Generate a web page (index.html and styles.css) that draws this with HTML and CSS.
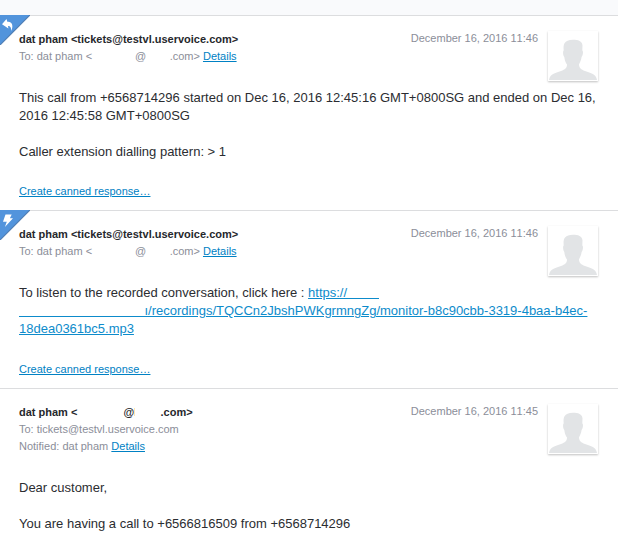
FILE: index.html
```
<!DOCTYPE html>
<html lang="en">
<head>
<meta charset="utf-8">
<title>Ticket messages</title>
<link rel="stylesheet" href="styles.css">
</head>
<body>
<svg class="defs" width="0" height="0" aria-hidden="true">
  <symbol id="person" viewBox="0 0 48 48">
    <path d="M24 7.800C29 7.800 33.300 9 33.500 13.500L33.300 18.500C34.500 19 34 23.500 32.600 25C32.200 28.500 30.500 31 30 32.500C30.200 36 32 37.500 36 39C42 41 47 42 48 48H0C1 42 6 41 12 39C16 37.500 18 36 18 32.500C16.800 31 15.700 28.500 15.300 25C14 23.500 13.700 19 14.700 18.500C14.200 12.500 14.700 8.300 24 7.800Z"/>
  </symbol>
</svg>
<div class="topbar"></div>
<article class="message">
  <svg class="corner" viewBox="0 0 30 30"><path class="flag" d="M0 0H30L0 30Z"/><path class="edge" d="M30 0L0 30"/><path class="glyph" d="M2 9.200L6.500 4L7.300 6.800C11.500 6 14 10 11.300 16C11.200 12.500 10.300 10.800 8 11L8.400 13.500Z"/></svg>
  <header class="head">
    <div class="who">
      <div class="from">dat pham &lt;tickets@testvl.uservoice.com&gt;</div>
      <div>To: dat pham &lt;<span class="gap g43"></span>@<span class="gap g23"></span>.com&gt; <a href="#">Details</a></div>
    </div>
    <time class="date">December 16, 2016 11:46</time>
    <div class="avatar"><svg><use href="#person"/></svg></div>
  </header>
  <div class="body">
    <p>This call from +6568714296 started on Dec 16, 2016 12:45:16 GMT+0800SG and ended on Dec 16, 2016 12:45:58 GMT+0800SG</p>
    <p>Caller extension dialling pattern: &gt; 1</p>
  </div>
  <footer class="foot"><a href="#">Create canned response…</a></footer>
</article>
<article class="message">
  <svg class="corner" viewBox="0 0 30 30"><path class="flag" d="M0 0H30L0 30Z"/><path class="edge" d="M30 0L0 30"/><path class="glyph" d="M5.500 4.500H11.700L9.900 8.300H13L4.900 17L6.800 11.700H3Z"/></svg>
  <header class="head">
    <div class="who">
      <div class="from">dat pham &lt;tickets@testvl.uservoice.com&gt;</div>
      <div>To: dat pham &lt;<span class="gap g43"></span>@<span class="gap g23"></span>.com&gt; <a href="#">Details</a></div>
    </div>
    <time class="date">December 16, 2016 11:46</time>
    <div class="avatar"><svg><use href="#person"/></svg></div>
  </header>
  <div class="body">
    <p>To listen to the recorded conversation, click here : <a href="#">https://<span class="blank b31"></span></a><br><a href="#"><span class="blank b125"></span>ı/recordings/TQCCn2JbshPWKgrmngZg/monitor-b8c90cbb-3319-4baa-b4ec-<br>18dea0361bc5.mp3</a></p>
  </div>
  <footer class="foot late"><a href="#">Create canned response…</a></footer>
</article>
<article class="message">
  <header class="head">
    <div class="who">
      <div class="from">dat pham &lt;<span class="gap g46"></span>@<span class="gap g26 sliver"></span>.com&gt;</div>
      <div>To: tickets@testvl.uservoice.com</div>
      <div>Notified: dat pham <a href="#">Details</a></div>
    </div>
    <time class="date">December 16, 2016 11:45</time>
    <div class="avatar"><svg><use href="#person"/></svg></div>
  </header>
  <div class="body">
    <p>Dear customer,</p>
    <p>You are having a call to +6566816509 from +6568714296</p>
  </div>
</article>
</body>
</html>
```
FILE: styles.css
```
body {
  margin: 0;
  height: 542px;
  overflow: hidden;
  background: #fff;
  color: #2b2d31;
  font: 13px/18px "Liberation Sans", Arial, sans-serif;
}
.defs { position: absolute; }
p { margin: 0 0 18px; }
a { color: #0081c4; }
.body a { color: #0d8bcb; }
.topbar { height: 15px; background: #f9fafc; }
.message {
  position: relative;
  border-top: 1px solid #dcdddf;
  padding: 15px 20px 10px 19px;
}
.corner { position: absolute; left: 0; top: -1px; width: 30px; height: 30px; }
.flag { fill: #5294dc; }
.edge { stroke: #507db3; stroke-width: 1.2; }
.glyph { fill: #fff; }
.head {
  display: flex;
  align-items: flex-start;
  font-size: 11px;
  line-height: 17px;
  color: #8b8e99;
}
.who { flex: 1; white-space: nowrap; }
.from { font-weight: bold; color: #26282c; }
.date { margin: -1px 10px 0 0; font-kerning: none; }
.avatar {
  box-sizing: border-box;
  width: 50px;
  height: 50px;
  padding: 1px;
  margin: 0 0 -50px;
  box-shadow: 0 1px 2px rgba(0, 0, 0, .25);
}
.avatar svg { display: block; width: 48px; height: 48px; fill: #e2e4e6; }
.gap { display: inline-block; }
.g43 { width: 43px; }
.g23 { width: 23.4px; }
.g46 { width: 46px; }
.g26 { width: 26.4px; }
.sliver {
  box-sizing: border-box;
  height: 8px;
  border-left: 1px solid #ffe6b0;
}
.blank {
  display: inline-block;
  box-sizing: border-box;
  height: 13px;
  vertical-align: -2px;
  border-bottom: 1px solid #0d8bcb;
}
.b31 { width: 31.500px; }
.b125 { width: 125.500px; }
.body { margin-top: 24px; }
.body p:last-child { margin-bottom: 0; }
.foot { margin-top: 22px; font-size: 11px; line-height: 17px; }
.late { margin-top: 23px; }
```
